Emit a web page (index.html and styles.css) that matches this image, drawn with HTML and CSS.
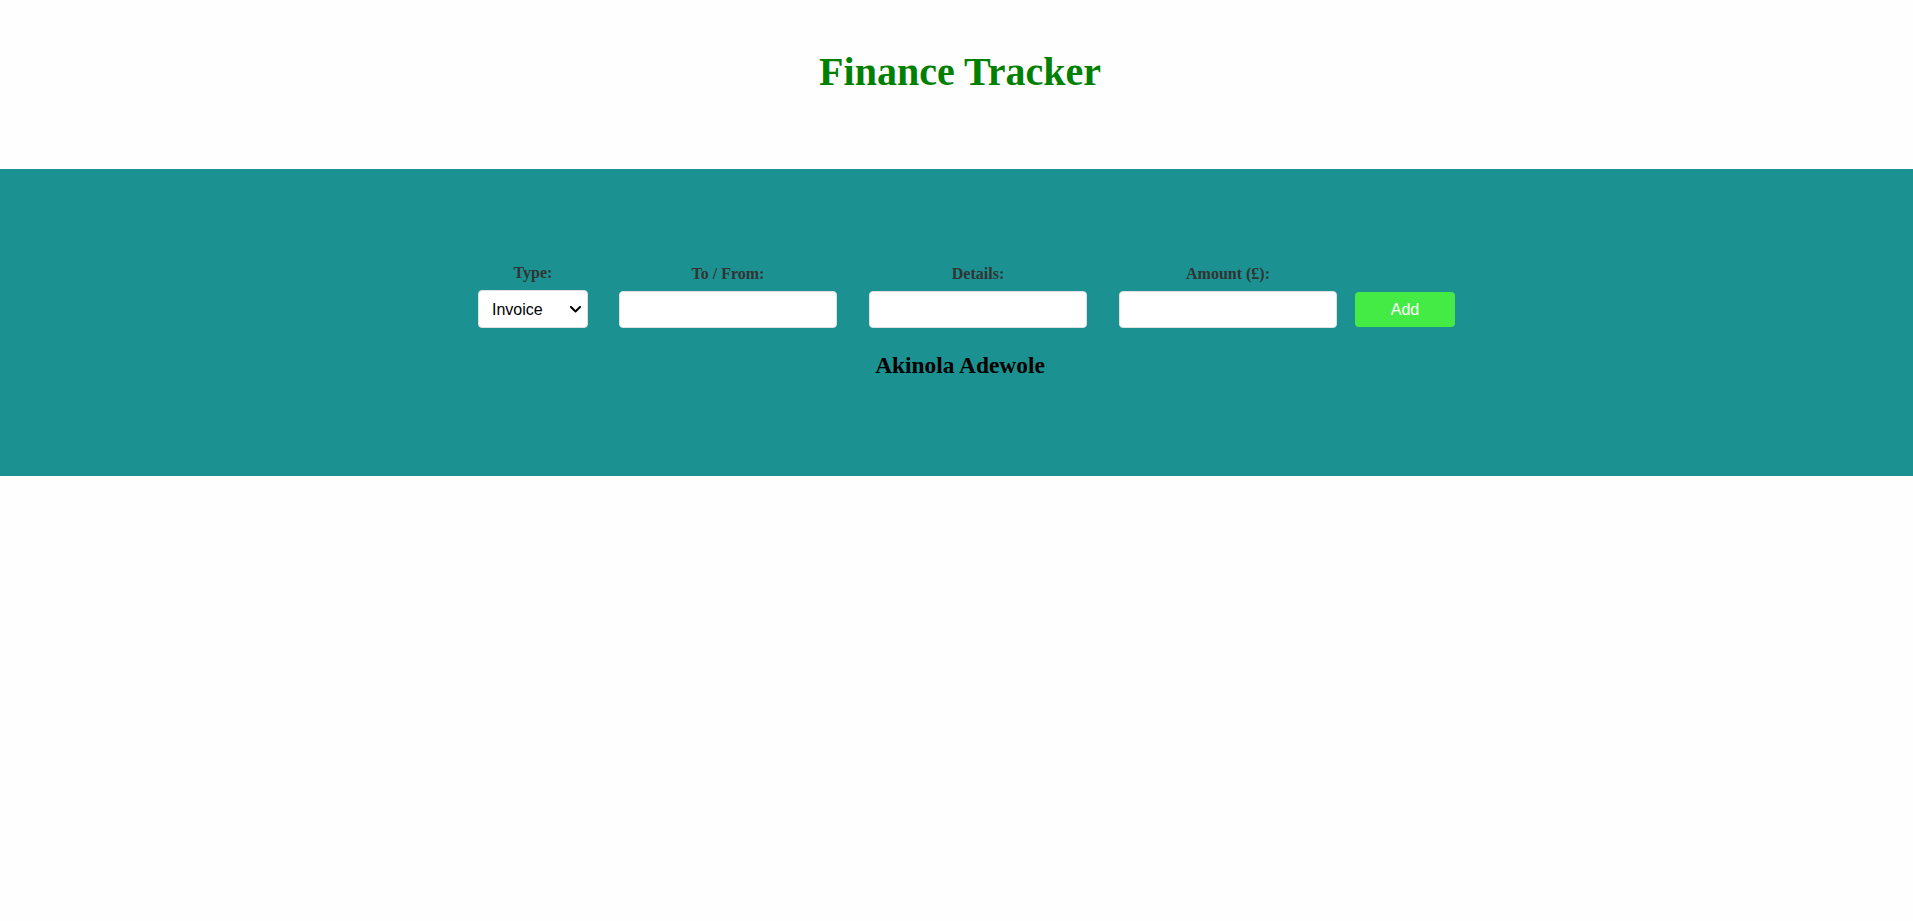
FILE: index.html
```html
<!DOCTYPE html>
<html lang="en">
<head>
<meta charset="utf-8">
<title>Finance Tracker</title>
<link rel="stylesheet" href="styles.css">
</head>
<body>
<header class="top">
  <h1 class="title">Finance Tracker</h1>
</header>
<section class="band">
  <form class="new-item-form">
    <div class="field">
      <label class="lbl" for="type">Type:</label>
      <div class="sel-wrap">
        <select id="type" class="ctl sel">
          <option value="invoice">Invoice</option>
          <option value="payment">Payment</option>
        </select>
        <svg class="chev" width="11" height="7" viewBox="0 0 11 7" aria-hidden="true">
          <path d="M1 1 L5.5 5.5 L10 1" fill="none" stroke="#000" stroke-width="2" stroke-linecap="round" stroke-linejoin="round"/>
        </svg>
      </div>
    </div>
    <div class="field">
      <label class="lbl" for="tofrom">To / From:</label>
      <input type="text" id="tofrom" class="ctl txt">
    </div>
    <div class="field">
      <label class="lbl" for="details">Details:</label>
      <input type="text" id="details" class="ctl txt">
    </div>
    <div class="field">
      <label class="lbl" for="amount">Amount (£):</label>
      <input type="number" id="amount" class="ctl txt">
    </div>
    <button type="button" class="add">Add</button>
  </form>
  <h2 class="owner">Akinola Adewole</h2>
</section>
</body>
</html>
```

FILE: styles.css
```css
html, body {
  margin: 0;
  padding: 0;
  background: #fefefe;
  font-family: "Liberation Serif", "Times New Roman", serif;
}
.top {
  box-sizing: border-box;
  height: 169px;
  padding-top: 48px;
  padding-left: 7px;
  text-align: center;
}
.title {
  margin: 0;
  font-size: 40px;
  font-weight: bold;
  color: #008000;
}
.band {
  box-sizing: border-box;
  height: 307px;
  background: #1b9191;
  padding-top: 95px;
}
.new-item-form {
  display: flex;
  justify-content: center;
  align-items: flex-end;
  padding-left: 20px;
}
.field {
  display: flex;
  flex-direction: column;
  align-items: center;
  margin-right: 32px;
}
.field:first-child {
  margin-right: 31px;
}
.field:nth-child(4) {
  margin-right: 18px;
}
.lbl {
  display: block;
  font-size: 16px;
  font-weight: bold;
  color: #333333;
  margin-bottom: 8px;
  line-height: 18px;
}
.ctl {
  box-sizing: border-box;
  border: 1px solid #e1e1e1;
  border-radius: 4px;
  background: #ffffff;
  font-family: "Liberation Sans", Arial, sans-serif;
  font-size: 16px;
  color: #000;
}
.sel-wrap {
  position: relative;
  display: flex;
}
.sel {
  -webkit-appearance: none;
  appearance: none;
  width: 110px;
  height: 38px;
  padding: 0 24px 0 13px;
}
.chev {
  position: absolute;
  right: 7px;
  top: 16px;
  pointer-events: none;
}
.txt {
  width: 218px;
  height: 37px;
  padding: 6px;
}
.add {
  box-sizing: border-box;
  width: 100px;
  height: 35px;
  margin-bottom: 1px;
  border: 0;
  border-radius: 4px;
  background: #44eb44;
  color: #ffffff;
  font-family: "Liberation Sans", Arial, sans-serif;
  font-size: 16px;
}
.owner {
  margin: 24px 0 0;
  padding-left: 7px;
  text-align: center;
  font-size: 23.4px;
  font-weight: bold;
  color: #000;
  line-height: 26px;
}
```
